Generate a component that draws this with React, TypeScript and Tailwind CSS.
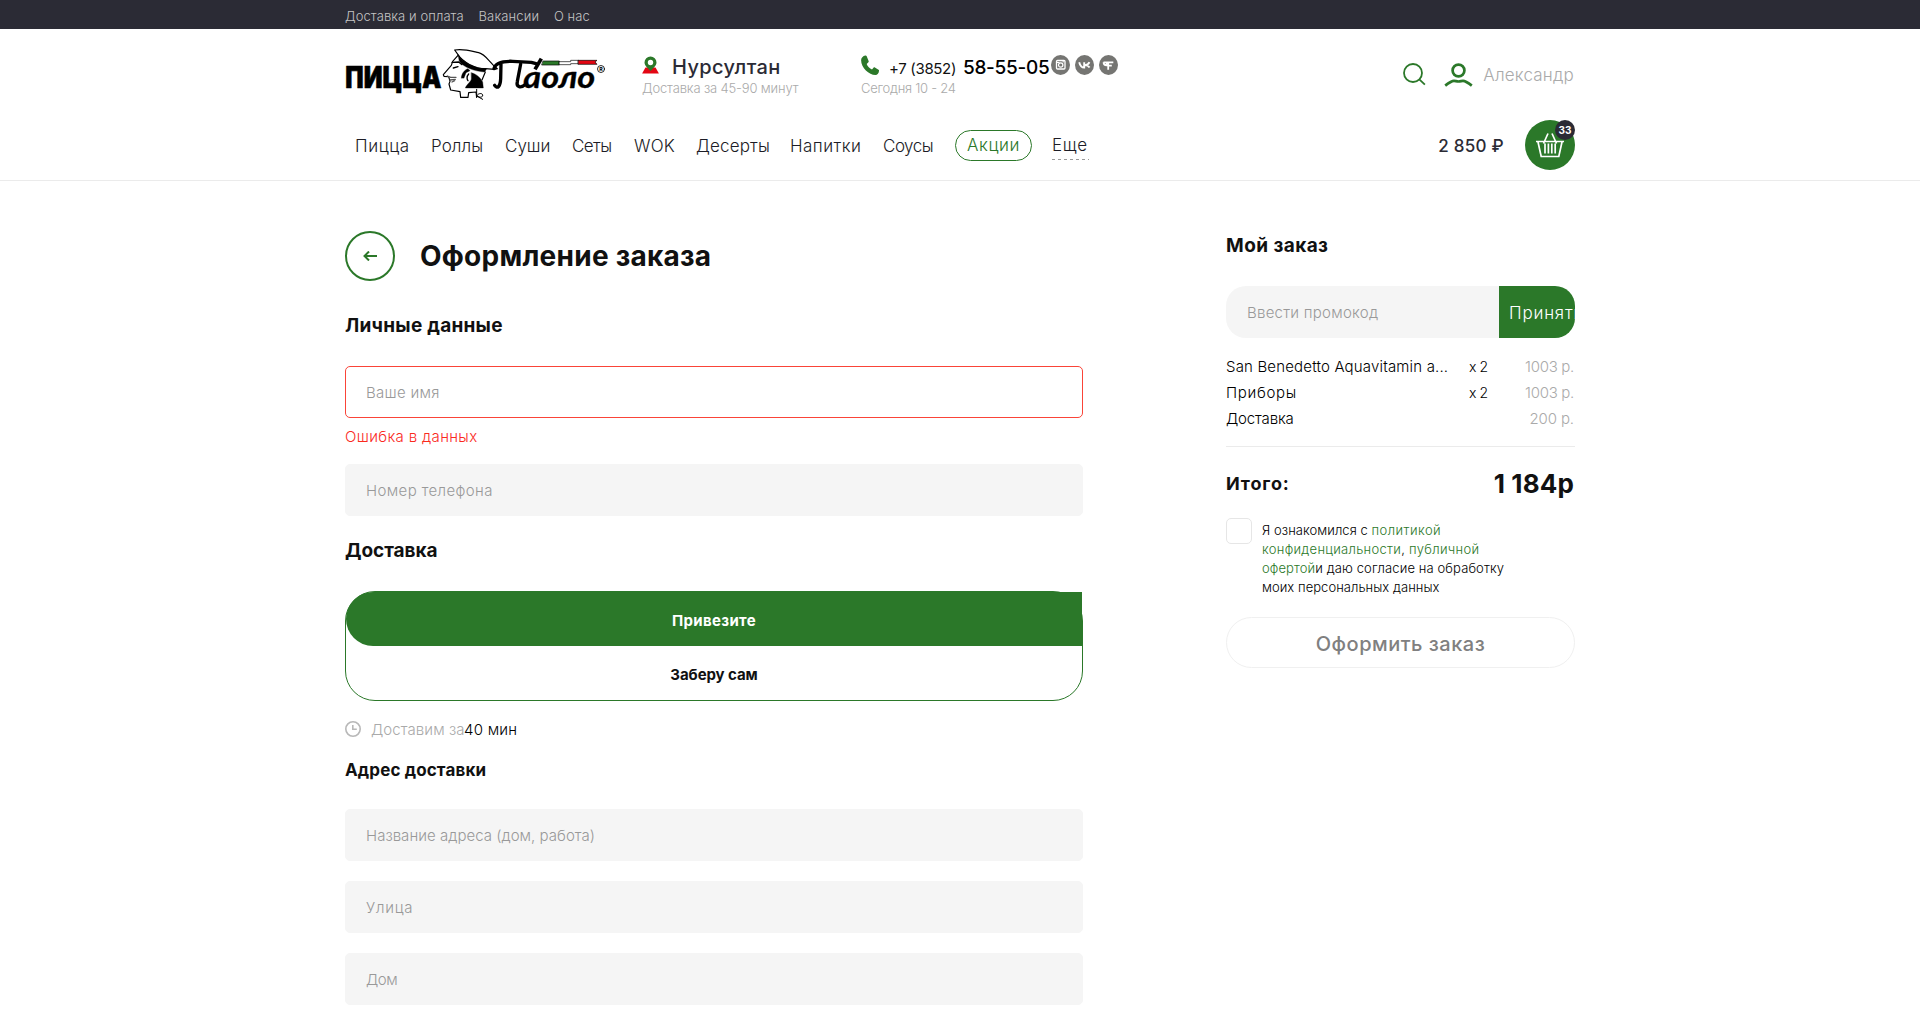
import type { ReactNode } from "react";

const navItems = [
  { label: "Пицца", cls: "w-[76px] tracking-[0.6px]" },
  { label: "Роллы", cls: "w-[74px] tracking-[0.1px]" },
  { label: "Суши", cls: "w-[67px] tracking-[0px]" },
  { label: "Сеты", cls: "w-[62px] tracking-[-0.6px]" },
  { label: "WOK", cls: "w-[62px] tracking-[0.2px]" },
  { label: "Десерты", cls: "w-[94px] tracking-[0.15px]" },
  { label: "Напитки", cls: "w-[93px] tracking-[0.45px]" },
  { label: "Соусы", cls: "w-[72px] tracking-[-0.5px]" },
];

function Logo() {
  return (
    <svg width="260" height="53" viewBox="45 144 780 159" className="block" fill="none" stroke="#000" strokeLinecap="round" strokeLinejoin="round">
      <text x="46" y="263" textLength="288" lengthAdjust="spacingAndGlyphs" fontFamily="Inter, sans-serif" fontWeight="900" fontSize="91" fill="#000" stroke="#000" strokeWidth="2">ПИЦЦА</text>
      <path d="M374 150C400 145 424 153 446 158C470 164 476 188 502 206L494 208L466 206C434 206 398 186 384 164Z" strokeWidth="3.5" fill="#fff" />
      <path d="M384 164C398 187 434 206 470 206L464 216C432 214 400 202 388 184Z" fill="#000" strokeWidth="1" />
      <path d="M384 166L368 184L364 196L340 224L342 229L356 230L360 244L357 252L362 270L390 275L392 292L414 292L416 278L438 276L440 292" strokeWidth="3.5" />
      <path d="M366 187L386 186L396 194M370 204L384 200" strokeWidth="4" />
      <path d="M352 228L362 232L378 232M360 240L376 238M366 246L374 242" stroke="#555" strokeWidth="4" />
      <path d="M394 234C394 222 402 210 414 206L420 212L408 218L402 234Z" fill="#000" strokeWidth="1" />
      <path d="M416 222C408 230 412 240 414 242" strokeWidth="4" />
      <path d="M424 218C438 222 450 230 458 246L460 264L406 264C410 252 426 244 424 234Z" fill="#000" strokeWidth="1" />
      <path d="M466 216L456 240" strokeWidth="3.5" />
      <path d="M440 268L440 288L458 298M440 288C444 278 460 278 458 288C454 294 446 292 440 286" strokeWidth="3" />
      <path d="M494 256C502 268 511 260 512 236L513 190M492 206C496 186 520 183 548 184L604 187L618 191" strokeWidth="10" />
      <path d="M572 192L562 244C558 262 572 266 588 252" strokeWidth="10" />
      <text x="580" y="264" textLength="216" lengthAdjust="spacingAndGlyphs" fontFamily="Lato, sans-serif" fontStyle="italic" fontWeight="700" fontSize="92" fill="#000" stroke="#000" strokeWidth="1">аоло</text>
      <path d="M634 176L615 208" strokeWidth="11" strokeLinecap="butt" />
      <path d="M640 183H688V195H636Z" fill="#2b7829" strokeWidth="2" />
      <path d="M688 185H722V181H746V191H722V194H688Z" fill="#fff" strokeWidth="2" />
      <path d="M745 181H801L795 186L801 193H745Z" fill="#e30613" strokeWidth="2" />
      <circle cx="813" cy="207" r="10.500" strokeWidth="2.500" />
      <text x="807.500" y="213" fontFamily="Inter, sans-serif" fontWeight="700" fontSize="16" fill="#000" stroke="none">R</text>
    </svg>
  );
}

function PinIcon() {
  return (
    <svg width="18" height="18" viewBox="0 0 18 18" className="-mt-[4px]">
      <path d="M3.500 11.500h10l3.400 6H.1z" fill="#e30613" />
      <path d="M8.500 .5a6 6 0 0 1 6 6c0 3-2.500 5-6 8.500-3.500-3.500-6-5.500-6-8.500a6 6 0 0 1 6-6z" fill="#2b7829" />
      <circle cx="8.500" cy="6.500" r="2.700" fill="#fff" />
    </svg>
  );
}

function PhoneIcon() {
  return (
    <svg width="18" height="20" viewBox="0 0 18 20" fill="#2b7829" className="-mt-[4px]">
      <path d="M4.300.4C2 .8.100 2.800.100 5.200c0 7.600 8 14.800 14.300 14.800 2 0 3.500-1.800 3.600-4.200.1-.5-.1-.9-.5-1.100l-3.600-2.200c-.5-.3-1-.2-1.400.2l-1.500 1.700C8.700 13.400 6.500 11.200 5.700 8.900l1.700-1.700c.4-.4.4-.8.2-1.300L5.600 1C5.300.5 4.900.3 4.300.4z" />
    </svg>
  );
}

function Social({ children }: { children: ReactNode }) {
  return (
    <svg width="19" height="20" viewBox="0 0 19 20">
      <ellipse cx="9.500" cy="10" rx="9.500" ry="10" fill="#757572" />
      {children}
    </svg>
  );
}

function Field({ label, tracking, error = false }: { label: string; tracking: string; error?: boolean }) {
  return (
    <div className={`flex h-[52px] items-center rounded-[5px] border pt-[3px] pl-5 text-[15px] font-light text-[#999] ${error ? "border-[#fa4438]" : "border-[#f5f5f5] bg-[#f5f5f5]"}`}>
      <span className={tracking}>{label}</span>
    </div>
  );
}

function OrderRow({ name, qty, price, nameCls, priceCls }: { name: string; qty?: string; price: string; nameCls: string; priceCls: string }) {
  return (
    <div className="flex h-[26px] items-center text-[15px] font-light whitespace-nowrap">
      <span className={`w-[243px] text-black ${nameCls}`}>{name}</span>
      <span className="text-sm tracking-[-0.4px] text-black">{qty}</span>
      <span className={`ml-auto pr-px text-[#aaa] ${priceCls}`}>{price}</span>
    </div>
  );
}

export default function App() {
  return (
    <div className="h-[1024px] overflow-hidden bg-white font-['Inter','Noto_Sans',sans-serif] text-[#111]">
      <div className="h-[29px] bg-[#2b2b35]">
        <div className="mx-auto flex h-full w-[1230px] items-center pt-[4px] text-[13px] leading-none font-light text-[#c4c4c4]">
          <a className="w-[133.5px] tracking-[0.08px]">Доставка и оплата</a>
          <a className="w-[75.5px] tracking-[0.15px]">Вакансии</a>
          <a className="tracking-[0.05px]">О нас</a>
        </div>
      </div>

      <header className="h-[152px] border-b border-[#ebebeb]">
        <div className="mx-auto w-[1230px]">
          <div className="flex h-[91px] items-start whitespace-nowrap">
            <div className="w-[297px] pt-[19px]"><Logo /></div>
            <div className="w-[219px] pt-[26px]">
              <div className="flex h-[24px] items-center">
                <PinIcon />
                <span className="pl-[12px] text-[20px] leading-none font-medium tracking-[0.38px] text-[#2b2b35]">Нурсултан</span>
              </div>
              <div className="text-[13px] font-light leading-[18px] tracking-[-0.16px] text-[#aaa]">Доставка за 45-90 минут</div>
            </div>
            <div className="pt-[26px]">
              <div className="flex h-[24px] items-center">
                <PhoneIcon />
                <span className="w-[75px] pt-[2px] pl-[10px] text-[15px] leading-none font-normal tracking-[-0.33px]">+7 (3852)</span>
                <span className="w-[97px] pl-[9px] text-[19px] leading-none font-medium tracking-[-0.3px] text-black">58-55-05</span>
                <span className="-mt-[4px] flex gap-[5px]">
                  <Social>
                    <rect x="5.500" y="5.500" width="8.500" height="8.500" rx="1" fill="none" stroke="#fff" strokeWidth="1.300" />
                    <circle cx="9.700" cy="10" r="2.200" fill="none" stroke="#fff" strokeWidth="1.200" />
                    <path d="M5.500 7.500h3M11.500 6.800h1.500" stroke="#fff" />
                  </Social>
                  <Social>
                    <path d="M4.200 7.200c.8 3.200 2.400 5.400 5 5.400V7.200M14.400 7.200c-.6 1.500-2 2.800-4.500 2.900 2.200.1 3.800 1.100 4.700 2.500" fill="none" stroke="#fff" strokeWidth="1.900" />
                  </Social>
                  <Social>
                    <path d="M4.500 7.300h9.800M9.200 7v7.700M9.200 10.700h3.600M4.600 7.300c0 2 1.200 3.100 3 3.100V7.300" fill="none" stroke="#fff" strokeWidth="1.800" />
                  </Social>
                </span>
              </div>
              <div className="text-[13px] font-light leading-[18px] tracking-[-0.27px] text-[#aaa]">Сегодня 10 - 24</div>
            </div>
            <div className="ml-auto flex pt-[34px]">
              <svg width="23" height="23" viewBox="0 0 23 23" fill="none" stroke="#2b7829" strokeWidth="1.800">
                <circle cx="10" cy="10" r="9" />
                <path d="M16.300 16.300l5.600 5.400" />
              </svg>
              <svg width="29" height="24" viewBox="0 0 29 24" fill="none" stroke="#2b7829" strokeWidth="2.700" className="ml-[18px]">
                <circle cx="14.500" cy="7.500" r="5.900" />
                <path d="M1.200 22.600C5 19.600 7.500 17.800 10 17.800c1.600 0 2.500.7 4.500.7s2.900-.7 4.500-.7c2.500 0 5 1.800 8.800 4.800" />
              </svg>
              <span className="pl-[10px] pr-px text-[17px] font-light leading-[25px] tracking-[0.2px] text-[#aaa]">Александр</span>
            </div>
          </div>
          <div className="flex h-[50px] items-center">
            <nav className="flex items-center pl-[10px] text-[17px] font-light text-[#1c1c26]">
              {navItems.map((n) => (
                <a key={n.label} className={`shrink-0 pt-[3px] ${n.cls}`}>{n.label}</a>
              ))}
              <a className="flex h-[31px] w-[77px] shrink-0 items-center justify-center rounded-[16px] border border-[#2b7829] pt-[2px] tracking-[0.6px] text-[#2b7829]">Акции</a>
              <a className="relative ml-[20px] pt-px tracking-[0.7px]">
                Еще
                <svg className="absolute top-[27px] left-0" width="37" height="1"><path d="M0 .5h37" stroke="#999" strokeDasharray="3 3" /></svg>
              </a>
            </nav>
            <span className="ml-auto pt-[3px] text-[17px] font-medium tracking-[0.27px] text-[#2b2b35]">2 850 ₽</span>
            <div className="relative ml-[21px] size-[50px] rounded-full bg-[#2b7829]">
              <svg className="absolute top-[13px] left-[11px]" width="28" height="25" viewBox="0 0 28 25" fill="none" stroke="#fff" strokeWidth="1.700">
                <path d="M0 8.500h28M2 9l3.200 14.500h17.600L26 9M7.500 10.500L12 .5M20.500 10.500L16 .5M9 10.500v10M12.400 10.500v10M15.800 10.500v10M19.200 10.500v10" />
              </svg>
              <span className="absolute top-0 right-0 flex size-5 items-center justify-center rounded-full bg-[#2b2b35] text-[10px] font-bold text-white">33</span>
            </div>
          </div>
        </div>
      </header>

      <main className="mx-auto flex w-[1230px] justify-between">
        <section className="w-[738px] pt-[50px]">
          <div className="flex items-center">
            <button className="flex size-[50px] items-center justify-center rounded-full border-2 border-[#2b7829]">
              <svg width="14" height="10" viewBox="0 0 14 10" fill="none" stroke="#2b7829" strokeWidth="2"><path d="M14 5H1.500M6 .5L1.500 5 6 9.500" /></svg>
            </button>
            <h1 className="pl-[25px] text-[28px] font-bold leading-none tracking-[0.25px]">Оформление заказа</h1>
          </div>
          <h2 className="mt-[33px] text-[19px] font-bold leading-6 tracking-[0.25px]">Личные данные</h2>
          <div className="mt-[28px]"><Field label="Ваше имя" tracking="tracking-[0.3px]" error /></div>
          <div className="mt-[9px] text-[15px] font-light leading-5 tracking-[0.35px] text-[#fa2a1e]">Ошибка в данных</div>
          <div className="mt-[17px]"><Field label="Номер телефона" tracking="tracking-[0.38px]" /></div>
          <h2 className="mt-[23px] text-[19px] font-bold leading-6 tracking-[-0.05px]">Доставка</h2>
          <div className="mt-[28px] h-[110px] rounded-[30px] border border-[#2b7829] text-center text-[15px] font-bold">
            <div className="h-[54px] rounded-l-[30px] bg-[#2b7829] leading-[57px] tracking-[0.35px] text-white">Привезите</div>
            <div className="h-[54px] leading-[57px] tracking-[-0.08px]">Заберу сам</div>
          </div>
          <div className="mt-[17px] flex h-[22px] items-center text-[15px] font-light whitespace-nowrap">
            <svg width="16" height="16" viewBox="0 0 16 16" fill="none" stroke="#b8b8b8" strokeWidth="1.600"><circle cx="8" cy="8" r="7.200" /><path d="M7.800 4v4.300h4" /></svg>
            <span className="w-[103px] pt-[3px] pl-[10px] tracking-[0.08px] text-[#aaa]">Доставим за</span>
            <span className="pt-[3px] tracking-[0.25px] text-black">40 мин</span>
          </div>
          <h3 className="mt-[18px] text-[17px] font-bold leading-6 tracking-[0.13px]">Адрес доставки</h3>
          <div className="mt-[27px] flex flex-col gap-5">
            <Field label="Название адреса (дом, работа)" tracking="tracking-[0.03px]" />
            <Field label="Улица" tracking="tracking-[0.8px]" />
            <Field label="Дом" tracking="tracking-[-0.5px]" />
          </div>
        </section>

        <aside className="w-[349px] pt-[53px]">
          <h2 className="text-[19px] font-bold leading-6 tracking-[0.43px]">Мой заказ</h2>
          <div className="mt-[28px] flex h-[52px]">
            <div className="flex w-[273px] items-center rounded-l-[20px] bg-[#f5f5f5] pt-[3px] pl-[21px] text-[15px] font-light text-[#999]">
              <span className="tracking-[0.25px]">Ввести промокод</span>
            </div>
            <button className="flex w-[76px] items-center rounded-r-[20px] bg-[#2b7829] pt-[4px] pl-[10px] text-[17px] font-light tracking-[0.8px] whitespace-nowrap text-white">Принять</button>
          </div>
          <div className="mt-[16px] border-b border-[#ebebeb] pb-[14px]">
            <OrderRow name="San Benedetto Aquavitamin a..." qty="x 2" price="1003 р." nameCls="tracking-[0.17px]" priceCls="tracking-[-0.3px]" />
            <OrderRow name="Приборы" qty="x 2" price="1003 р." nameCls="tracking-[0.7px]" priceCls="tracking-[-0.3px]" />
            <OrderRow name="Доставка" price="200 р." nameCls="tracking-[-0.15px]" priceCls="tracking-[-0.1px]" />
          </div>
          <div className="mt-[21px] flex h-[30px] items-center justify-between font-bold">
            <span className="pt-px text-[18px] tracking-[0.85px]">Итого:</span>
            <span className="pr-px text-[26px] tracking-[0.15px]">1 184р</span>
          </div>
          <div className="mt-[20px] flex">
            <span className="size-[26px] rounded-[5px] border border-[#e6e6e6]" />
            <p className="pt-[3px] pl-[10px] text-[13px] leading-[19px] font-light whitespace-nowrap text-black">
              <span className="tracking-[0.06px]">Я ознакомился с </span>
              <a className="tracking-[0.45px] text-[#2b7829]">политикой</a><br />
              <span className="tracking-[0.3px]"><a className="text-[#2b7829]">конфиденциальности</a>, <a className="text-[#2b7829]">публичной</a></span><br />
              <span className="tracking-[0.11px]"><a className="text-[#2b7829]">офертой</a>и даю согласие на обработку</span><br />
              <span className="tracking-[0.05px]">моих персональных данных</span>
            </p>
          </div>
          <button className="mt-[20px] flex h-[51px] w-full items-center justify-center rounded-[26px] border border-[#f0f0f0] pt-[2px] text-[20px] font-medium tracking-[0.5px] text-[#808080]">Оформить заказ</button>
        </aside>
      </main>
    </div>
  );
}
